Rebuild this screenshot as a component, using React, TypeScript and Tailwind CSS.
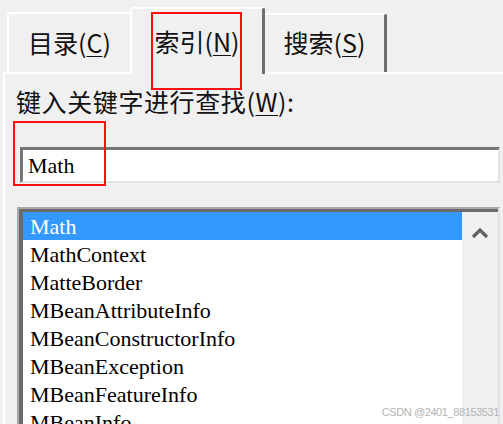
export default function App() {
  const items = [
    "Math",
    "MathContext",
    "MatteBorder",
    "MBeanAttributeInfo",
    "MBeanConstructorInfo",
    "MBeanException",
    "MBeanFeatureInfo",
    "MBeanInfo",
  ];
  return (
    <div className="relative flex flex-col w-[503px] h-[424px] overflow-hidden bg-[#f0f0f0] text-black">
      {/* tab strip */}
      <div className="flex items-end h-[72px] pl-[7px] shrink-0 font-['Noto_Sans_CJK_SC','Noto_Sans',sans-serif] text-[25px] leading-none text-[#111]">
        <div className="w-[123px] h-[60px] border-t-2 border-l-2 border-white rounded-tl-[3px] flex items-center justify-center pb-[2px]">
          <span>
            目录(<span className="underline decoration-1 underline-offset-[3px]">C</span>)
          </span>
        </div>
        <div className="relative z-10 -mb-[2px] w-[135px] h-[67px] border-t-2 border-l-2 border-r-[3px] border-t-white border-l-white border-r-[#6e6e6e] rounded-t-[3px] bg-[#f0f0f0] flex justify-center pt-[20px]">
          <span>
            索引(<span className="underline decoration-1 underline-offset-[3px]">N</span>)
          </span>
        </div>
        <div className="w-[122px] h-[59px] border-t-2 border-r-[3px] border-t-white border-r-[#6e6e6e] rounded-tr-[3px] flex items-center justify-center pb-[2px]">
          <span>
            搜索(<span className="underline decoration-1 underline-offset-[3px]">S</span>)
          </span>
        </div>
      </div>

      {/* panel */}
      <div className="flex-1 flex flex-col ml-[3px] border-t-2 border-l-2 border-white">
        <div className="mt-[12px] pl-[11px] h-[30px] leading-[30px] font-['Noto_Sans_CJK_SC','Noto_Sans',sans-serif] text-[25px] tracking-[0.6px] text-[#111] whitespace-nowrap">
          键入关键字进行查找(<span className="underline decoration-1 underline-offset-[3px]">W</span>):
        </div>

        {/* input */}
        <div className="mt-[31px] ml-[15px] mr-[3px] h-[36px] border-t-[3px] border-l-[3px] border-t-[#767676] border-l-[#767676] border-b-2 border-r-2 border-b-[#e3e3e3] border-r-[#e3e3e3] bg-white flex items-center pl-[5px] pt-[1px] font-['Liberation_Serif',serif] text-[22px] leading-none">
          Math
        </div>

        {/* list */}
        <div className="mt-[24px] ml-[12px] mr-[3px] h-[260px] shrink-0 border-t-2 border-l-2 border-t-[#a8a8a8] border-l-[#a8a8a8] border-r-2 border-r-[#e3e3e3]">
          <div className="flex h-full border-t-[3px] border-l-[4px] border-[#6b6b6b] bg-white">
            <div className="flex-1 flex flex-col font-['Liberation_Serif',serif] text-[22px]">
              {items.map((it, i) => (
                <div
                  key={it}
                  className={
                    i === 0
                      ? "h-[28px] leading-[26px] pt-[2px] pl-[7px] bg-[#3399ff] text-white"
                      : "h-[28px] leading-[26px] pt-[2px] pl-[7px] text-black"
                  }
                >
                  {it}
                </div>
              ))}
            </div>
            <div className="w-[36px] bg-[#f0f0f0] flex flex-col">
              <div className="h-[42px] flex items-center justify-center">
                <svg width="18" height="12" viewBox="0 0 18 12">
                  <path d="M2 10 L9 3 L16 10" fill="none" stroke="#5f5f5f" strokeWidth="3.2" />
                </svg>
              </div>
            </div>
          </div>
        </div>
      </div>

      {/* annotation boxes */}
      <div className="absolute left-[151px] top-[12px] w-[91px] h-[78px] border-2 border-[#ff1010] z-20" />
      <div className="absolute left-[13px] top-[121px] w-[93px] h-[65px] border-2 border-[#ff1010] z-20" />

      {/* watermark */}
      <div className="absolute right-[4px] bottom-[6px] z-20 font-['Liberation_Sans',sans-serif] text-[11px] leading-none tracking-[-0.4px] text-[#b4b4b4]">
        CSDN @2401_88153531
      </div>
    </div>
  );
}
